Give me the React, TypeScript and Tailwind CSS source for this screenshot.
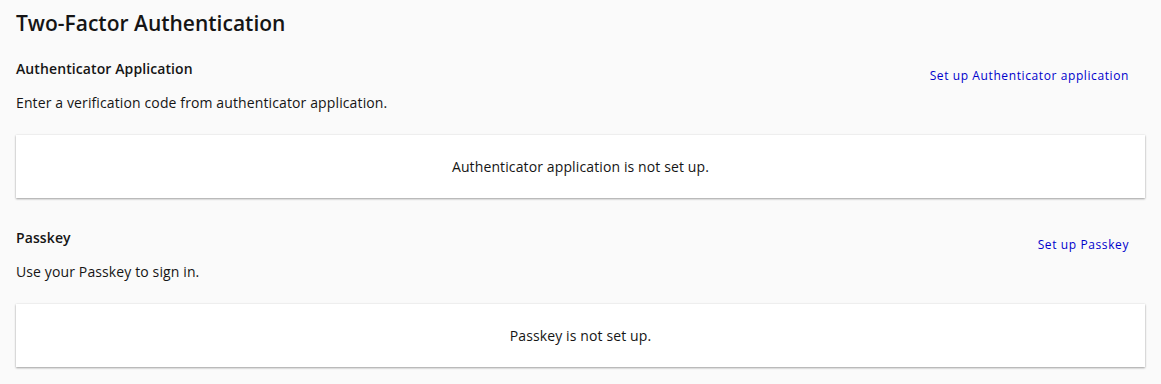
import React from "react";

function Section({ title, desc, link, empty }: { title: string; desc: string; link: string; empty: string }) {
  return (
    <div>
      <div className="flex items-start justify-between">
        <div>
          <div className="text-[14px] font-semibold text-[#151515] leading-[20px] tracking-[0.1px]">{title}</div>
          <div className="mt-[14px] text-[14px] text-[#151515] leading-[20px] tracking-[0.12px]">{desc}</div>
        </div>
        <button className="mt-[9px] mr-[16px] text-[12px] text-[#0000cc] leading-[16px] tracking-[0.6px]">{link}</button>
      </div>
      <div className="mt-[22px] h-[63px] bg-white flex items-center justify-center text-[14px] tracking-[0.12px] text-[#151515] shadow-[0_1px_2px_rgba(0,0,0,0.35),0_0_2px_rgba(0,0,0,0.08)]">
        {empty}
      </div>
    </div>
  );
}

export default function App() {
  return (
    <div className="min-h-[384px] bg-[#fafafa] px-[16px] pt-[8px]" style={{ fontFamily: '"Open Sans", sans-serif' }}>
      <h1 className="text-[21px] font-semibold text-[#151515] leading-[28px] mt-[1px]">Two-Factor Authentication</h1>
      <div className="mt-[22px]">
        <Section
          title="Authenticator Application"
          desc="Enter a verification code from authenticator application."
          link="Set up Authenticator application"
          empty="Authenticator application is not set up."
        />
      </div>
      <div className="mt-[30px]">
        <Section
          title="Passkey"
          desc="Use your Passkey to sign in."
          link="Set up Passkey"
          empty="Passkey is not set up."
        />
      </div>
    </div>
  );
}
